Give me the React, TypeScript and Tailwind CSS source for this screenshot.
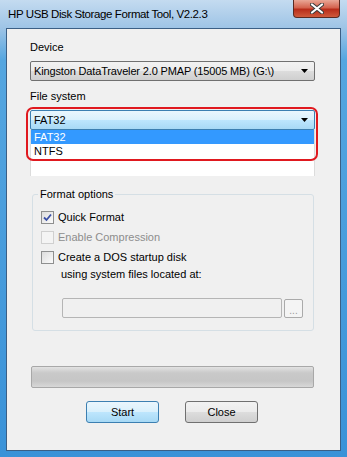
const font = { fontFamily: '"Liberation Sans", Arial, sans-serif' }

const Arrow = () => (
  <svg width="7" height="4" viewBox="0 0 7 4">
    <path d="M0 0h7L3.5 4z" fill="#000" />
  </svg>
)

const Check = ({ checked, disabled }: { checked?: boolean; disabled?: boolean }) => (
  <div
    className={
      disabled
        ? "w-[13px] h-[13px] border border-[#d0d0d0] bg-[#f4f4f4]"
        : "w-[13px] h-[13px] border border-[#8e8f8f] bg-[linear-gradient(135deg,#dcdcdc,#fbfbfb)] flex items-center justify-center"
    }
  >
    {checked && (
      <svg width="9" height="9" viewBox="0 0 9 9">
        <path d="M1 4.5l2.5 2.5L8 1.5" stroke="#3a4fa6" strokeWidth="1.8" fill="none" />
      </svg>
    )}
  </div>
)

export default function App() {
  return (
    <div
      style={font}
      className="w-[347px] h-[457px] flex flex-col px-[6px] pb-[6px] bg-[linear-gradient(to_bottom,#c4dbf0_0px,#9ec4e6_28px,#55a6e0_60px,#3a92d8_100%)] text-[11px] text-black overflow-hidden whitespace-nowrap"
    >
      <div className="h-[28px] flex items-start justify-between">
        <div className="pt-[7px] pl-[2px] text-[11.5px] tracking-[-0.4px] leading-[15px] text-black">
          HP USB Disk Storage Format Tool, V2.2.3
        </div>
        <div className="w-[47px] h-[18px] mr-[1px] rounded-b-[4px] border border-t-0 border-[#5a2a22] bg-[linear-gradient(to_bottom,#e9a796,#d4644f_45%,#b82d1a_55%,#cf5a3c)] flex items-center justify-center">
          <svg width="14" height="11" viewBox="0 0 14 11">
            <path d="M2 1.5L12 9.5M12 1.5L2 9.5" stroke="#3a3a3a" strokeWidth="4" strokeLinecap="round" />
            <path d="M2 1.5L12 9.5M12 1.5L2 9.5" stroke="#fff" strokeWidth="2.2" strokeLinecap="round" />
          </svg>
        </div>
      </div>
      <div className="flex-1 border border-[#3b5f85] bg-[#f0f0f0] flex flex-col pl-[23px] pr-[25px]">
        <div className="mt-[11px] leading-[14px]">Device</div>
        <div className="mt-[7px] h-[20px] border border-[#707070] rounded-[2px] bg-[linear-gradient(to_bottom,#f2f2f2,#ebebeb_50%,#dddddd_50%,#cfcfcf)] flex items-center justify-between pl-[3px] pr-[6px]">
          <span className="leading-[14px] tracking-[-0.15px]">Kingston DataTraveler 2.0 PMAP (15005 MB) (G:\)</span>
          <Arrow />
        </div>
        <div className="mt-[8px] leading-[14px]">File system</div>
        <div className="relative mt-[7px]">
          <div className="absolute left-[-4px] right-[-3px] top-[-3px] h-[54px] border-2 border-[#e0191f] rounded-[7px] z-10" />
          <div className="h-[20px] border border-[#3c7fb1] rounded-[2px] bg-[linear-gradient(to_bottom,#eaf6fd,#d9f0fc_50%,#bee6fd_50%,#a7d9f5)] flex items-center justify-between pl-[3px] pr-[6px]">
            <span className="leading-[14px]">FAT32</span>
            <Arrow />
          </div>
          <div className="h-[46px] bg-white border-x border-[#dcdcdc]">
            <div className="h-[14px] bg-[#3399ff] text-white leading-[14px] pl-[3px]">FAT32</div>
            <div className="h-[14px] leading-[14px] pl-[3px]">NTFS</div>
          </div>
        </div>
        <div className="relative mt-[18px] ml-[2px] mr-[1px] h-[137px] border border-[#d5dfe5] rounded-[3px] pl-[8px] flex flex-col">
          <div className="absolute top-[-8px] left-[5px] px-[2px] bg-[#f0f0f0] leading-[14px]">Format options</div>
          <div className="mt-[15px] flex items-center gap-[4px] h-[14px]">
            <Check checked />
            <span>Quick Format</span>
          </div>
          <div className="mt-[6px] flex items-center gap-[4px] h-[14px] text-[#8d8d8d]">
            <Check disabled />
            <span>Enable Compression</span>
          </div>
          <div className="mt-[6px] flex items-center gap-[4px] h-[14px]">
            <Check />
            <span>Create a DOS startup disk</span>
          </div>
          <div className="mt-[3px] pl-[20px] h-[14px] leading-[14px]">using system files located at:</div>
          <div className="mt-[17px] pl-[21px] flex items-center gap-[2px]">
            <div className="w-[220px] h-[20px] border border-[#b5b5b5] rounded-[2px] bg-[#f0f0f0]" />
            <div className="w-[19px] h-[19px] border border-[#aaaaaa] rounded-[2px] bg-[#f4f4f4] flex items-end justify-center text-[#9a9a9a] text-[10px] leading-[12px]">...</div>
          </div>
        </div>
        <div className="mt-[35px] ml-[1px] mr-[1px] h-[22px] border border-[#a8a8a8] rounded-[2px] bg-[linear-gradient(to_bottom,#e2e2e2,#c9c9c9_30%,#c6c6c6_70%,#d8d8d8)]" />
        <div className="mt-[13px] flex justify-center gap-[26px] pr-[1px]">
          <div className="w-[73px] h-[22px] border border-[#3c7fb1] rounded-[3px] bg-[linear-gradient(to_bottom,#eaf6fd,#d9f0fc_50%,#bee6fd_50%,#a7d9f5)] flex items-center justify-center">Start</div>
          <div className="w-[73px] h-[22px] border border-[#707070] rounded-[3px] bg-[linear-gradient(to_bottom,#f2f2f2,#ebebeb_50%,#dddddd_50%,#cfcfcf)] flex items-center justify-center">Close</div>
        </div>
      </div>
    </div>
  )
}
